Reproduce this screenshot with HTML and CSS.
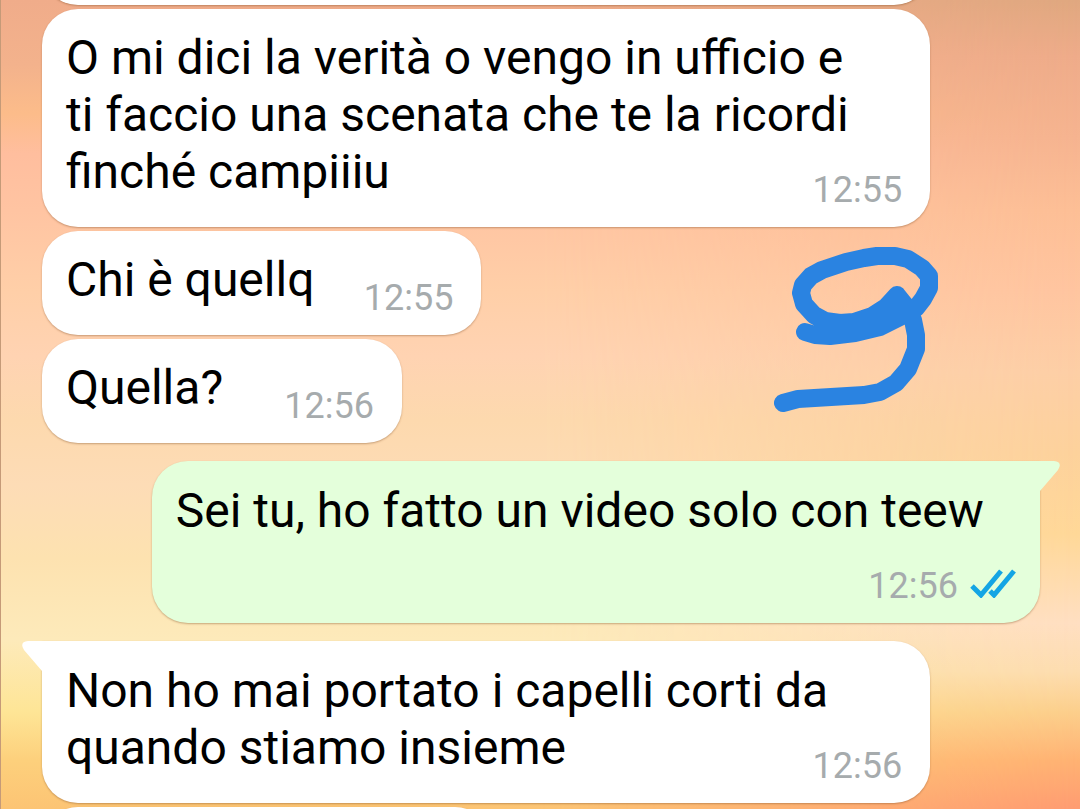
FILE: index.html
```html
<!DOCTYPE html>
<html lang="it">
<head>
  <meta charset="UTF-8">
  <meta name="viewport" content="width=device-width, initial-scale=1.0">
  <title>Chat</title>
  <link rel="stylesheet" href="styles.css">
</head>
<body>

  <main class="chat">
    <!-- end of the previous message, scrolled away -->
    <div class="bubble previous"></div>

    <div class="bubble">
      <p class="text">O mi dici la verità o vengo in ufficio e ti faccio una scenata che te la ricordi finché campiiiu<span class="spacer"></span></p>
      <time class="time">12:55</time>
    </div>

    <div class="bubble">
      <p class="text">Chi è quellq<span class="spacer"></span></p>
      <time class="time">12:55</time>
    </div>

    <div class="bubble">
      <p class="text">Quella?&nbsp;<span class="spacer"></span></p>
      <time class="time">12:56</time>
    </div>

    <div class="bubble sent first">
      <svg class="tail" viewBox="0 0 21 36" aria-hidden="true">
        <path d="M0 0H15Q24 1 19 9L1 30V36H0Z" fill="#e4ffdb"/>
      </svg>
      <p class="text">Sei tu, ho fatto un video solo con teew<span class="spacer"></span></p>
      <div class="time">
        <time>12:56</time>
        <svg class="ticks" viewBox="0 0 46 30" role="img" aria-label="Letto">
          <path d="M2 18L11 27L31 3M20 23L24 27L44 3"/>
        </svg>
      </div>
    </div>

    <div class="bubble first">
      <svg class="tail" viewBox="0 0 21 36" aria-hidden="true">
        <path d="M21 0H6Q-3 1 2 9L20 30V36H21Z" fill="#fff"/>
      </svg>
      <p class="text">Non ho mai portato i capelli corti da quando stiamo insieme<span class="spacer"></span></p>
      <time class="time">12:56</time>
    </div>

    <!-- next message, only its top edge shows -->
    <div class="bubble next"></div>
  </main>

  <!-- blue pen scribble -->
  <svg class="scribble" viewBox="0 0 200 200" aria-hidden="true">
    <path d="M45 102L55 105L70 106L95 103L120 97L140 87L156 78L163 69L169 58L169 46L162 38L148 29L135 26H117L104 28L86 32L62 40L51 46L43 55L41 63L44 74L54 85L65 91L80 93L94 92L112 86L126 77L137 65L145 75L153 90L156 105L156 119L148 139L136 153L120 162L104 165L38 169L23 173"/>
  </svg>

</body>
</html>
```
FILE: styles.css
```css
* {
  margin: 0;
  padding: 0;
  box-sizing: border-box;
}

body {
  position: relative;
  height: 100vh;
  overflow: hidden;
  font-family: Roboto, sans-serif;
  color: #000;
  background: linear-gradient(#e0a880 0%, #efac8a 7%, #f6b490 17%, #fdbf96 26%, #ffc5a0 36%, #fdcfa6 46%, #fdd29c 56%, #ffd898 66%, #ffdfc2 77%, #fdddb0 83%, #fccf8c 88%, #ffb273 94%, #ff9c72 100%);
}

/* lighter left side of the wallpaper */
body::before {
  content: "";
  position: absolute;
  inset: 0;
  border-left: 1px solid #c59a78;
  background: linear-gradient(#f0ac8a 0%, #f3b28c 8%, #fcbc8a 14%, #ffbe9e 19%, #ffc4a2 26%, #ffcfa8 36%, #ffd3b2 44%, #fdd9ae 52%, #fddcb6 60%, #fde2b0 69%, #fdeaba 79%, #fee596 88%, #fdd07c 94%, #fcc474 100%);
  -webkit-mask-image: linear-gradient(to right, #000 50%, transparent);
  mask-image: linear-gradient(to right, #000 50%, transparent);
}

.chat {
  position: relative;
  display: flex;
  flex-direction: column;
  align-items: flex-start;
  gap: 4px;
  margin-top: -99px;
  padding: 0 40px 0 42px;
}

.bubble {
  position: relative;
  display: grid;
  flex-shrink: 0;
  max-width: 89%;
  min-height: 104px;
  padding: 20px 28px 27px 24px;
  border-radius: 36px;
  background: #fff;
  box-shadow: 0 1px 2px rgba(120, 70, 30, 0.4);
}

/* first bubble of a group, has the tail */
.first {
  margin-top: 14px;
  padding-top: 21px;
  border-top-left-radius: 0;
}

.sent {
  align-self: flex-end;
  border-radius: 36px 0 36px 36px;
  background: #e4ffdb;
}

/* text and time share one cell, the spacer keeps them apart */
.text,
.time {
  grid-area: 1 / 1;
}

.text {
  padding-right: 24px;
  font-size: 48px;
  line-height: 57px;
}

.spacer {
  display: inline-block;
  width: 115px;
}

.time {
  display: flex;
  align-items: center;
  align-self: end;
  justify-self: end;
  gap: 12px;
  margin-bottom: -12px;
  font-size: 36px;
  line-height: 44px;
  color: #a6abad;
}

.sent .time {
  margin-right: -4px;
}

.ticks {
  width: 46px;
  height: 30px;
  margin-bottom: 6px;
  fill: none;
  stroke: #14a5e4;
  stroke-width: 5;
}

.tail {
  position: absolute;
  top: 0;
  left: -20px;
  width: 21px;
  height: 36px;
}

.sent .tail {
  left: auto;
  right: -20px;
}

.previous {
  width: 89%;
}

.next {
  width: 45%;
}

.scribble {
  position: absolute;
  top: 230px;
  right: 120px;
  width: 200px;
  height: 200px;
  fill: none;
  stroke: #2a83e1;
  stroke-width: 18;
  stroke-linecap: round;
  stroke-linejoin: round;
}
```
